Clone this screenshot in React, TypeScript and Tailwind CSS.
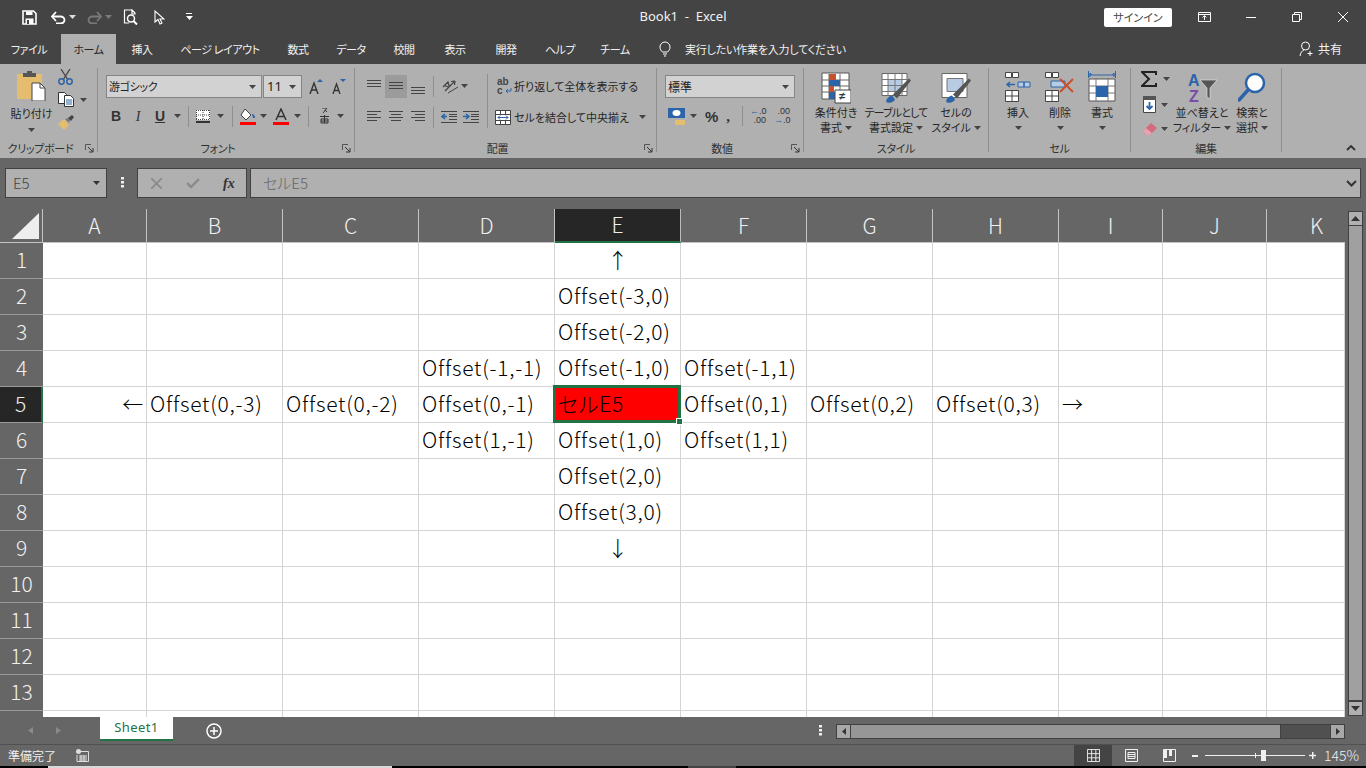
import type { ReactNode } from "react";

const colHeaders = ["A", "B", "C", "D", "E", "F", "G", "H", "I", "J", "K"];
const rowNumbers = [1, 2, 3, 4, 5, 6, 7, 8, 9, 10, 11, 12, 13, 14];

const cellText: Record<string, string> = {
  E1: "↑",
  E2: "Offset(-3,0)",
  E3: "Offset(-2,0)",
  D4: "Offset(-1,-1)",
  E4: "Offset(-1,0)",
  F4: "Offset(-1,1)",
  A5: "←",
  B5: "Offset(0,-3)",
  C5: "Offset(0,-2)",
  D5: "Offset(0,-1)",
  E5: "セルE5",
  F5: "Offset(0,1)",
  G5: "Offset(0,2)",
  H5: "Offset(0,3)",
  I5: "→",
  D6: "Offset(1,-1)",
  E6: "Offset(1,0)",
  F6: "Offset(1,1)",
  E7: "Offset(2,0)",
  E8: "Offset(3,0)",
  E9: "↓",
};

function Caret({ color = "#444" }: { color?: string }) {
  return (
    <svg width="7" height="4" viewBox="0 0 7 4" className="shrink-0">
      <path d="M0 0h7L3.5 4z" fill={color} />
    </svg>
  );
}

function Launcher() {
  return (
    <div className="w-[16px] flex justify-end pr-[3px] shrink-0">
      <svg width="9" height="9" viewBox="0 0 9 9" className="shrink-0">
        <path d="M.5 6V.5H6" stroke="#555" fill="none" />
        <path d="M3 3l5 5M8 4v4H4" stroke="#333" fill="none" />
      </svg>
    </div>
  );
}

function RibbonGroup({ label, launcher, className, children }: { label: string; launcher?: boolean; className: string; children: ReactNode }) {
  return (
    <>
      <div className={`flex flex-col h-[94px] shrink-0 ${className}`}>
        <div className="h-[75px] flex flex-col">{children}</div>
        <div className="h-[18px] flex items-center">
          <span className="flex-1 text-center text-[11px] leading-4 tracking-[-0.3px] text-[#303030] whitespace-nowrap">{label}</span>
          {launcher && <Launcher />}
        </div>
      </div>
      <div className="w-px h-[84px] mt-[4px] bg-[#8f8f8f] shrink-0" />
    </>
  );
}

function Lines({ ys, x1 = 0, x2 = 14 }: { ys: number[]; x1?: number; x2?: number }) {
  return (
    <>
      {ys.map((y) => (
        <path key={y} d={`M${x1} ${y + 0.5}H${x2}`} stroke="#444" />
      ))}
    </>
  );
}

function AlignIcon({ ys, short }: { ys: number[]; short?: "left" | "center" | "right" }) {
  return (
    <svg width="14" height="20" viewBox="0 0 14 20" className="shrink-0">
      {ys.map((y, i) => {
        const odd = i % 2 === 1 && short;
        const x1 = odd && short === "right" ? 4 : odd && short === "center" ? 2 : 0;
        const x2 = odd && short === "left" ? 10 : odd && short === "center" ? 12 : 14;
        return <path key={y} d={`M${x1} ${y + 0.5}H${x2}`} stroke="#444" />;
      })}
    </svg>
  );
}

function IndentIcon({ flip }: { flip?: boolean }) {
  return (
    <svg width="16" height="12" viewBox="0 0 16 12" className="shrink-0">
      <Lines ys={[0, 11]} x1={0} x2={16} />
      <Lines ys={[3, 5, 8]} x1={8} x2={16} />
      {flip ? (
        <path d="M0 5.5h5M3 3l3 2.5L3 8" stroke="#2a65a8" strokeWidth="1.6" fill="none" />
      ) : (
        <path d="M6 5.5H1M4 3L1 5.5 4 8" stroke="#2a65a8" strokeWidth="1.6" fill="none" />
      )}
    </svg>
  );
}

function BigButton({ lines, children, className, caretInline }: { lines: string[]; children: ReactNode; className: string; caretInline?: boolean }) {
  return (
    <div className={`flex flex-col items-center shrink-0 ${className}`}>
      <div className="h-[41px] pt-[8px] flex justify-center">{children}</div>
      {lines.map((line, i) => (
        <div
          key={line}
          className={`h-[15px] leading-[15px] text-[11px] text-[#262626] whitespace-nowrap flex items-center gap-[3px] ${line.length > 5 ? "tracking-[-0.8px]" : ""}`}
        >
          {line}
          {caretInline && i === lines.length - 1 && <Caret />}
        </div>
      ))}
      {!caretInline && (
        <div className="h-[15px] flex items-center">
          <Caret />
        </div>
      )}
    </div>
  );
}

function Tab({ className, active, children }: { className: string; active?: boolean; children: ReactNode }) {
  return (
    <div className={`h-[30px] shrink-0 flex items-center justify-center text-[11px] tracking-[-0.4px] ${active ? "bg-[#b0b0b0] text-[#262626]" : "text-[#f2f2f2]"} ${className}`}>
      {children}
    </div>
  );
}

function TitleBar() {
  return (
    <div className="h-[34px] bg-[#444444] flex items-center text-white shrink-0 [&>svg]:shrink-0 [&>div]:shrink-0">
      <svg width="15" height="15" viewBox="0 0 15 15" className="ml-[22px]">
        <path d="M1 1h10.5L14 3.5V14H1z" fill="none" stroke="#fff" strokeWidth="1.6" />
        <path d="M4 1.500h6.500V5H4zM3.500 8.500h8V14h-8z" fill="#fff" />
        <path d="M5 10v4h2v-4z" fill="#444" />
      </svg>
      <svg width="15" height="13" viewBox="0 0 15 13" className="ml-[14px]">
        <path d="M1.500 5.500h8a4 3.500 0 0 1 0 7H5" fill="none" stroke="#fff" strokeWidth="1.8" />
        <path d="M5 1L1 5.500 5 10" fill="none" stroke="#fff" strokeWidth="1.8" />
      </svg>
      <div className="ml-[3px]">
        <Caret color="#ddd" />
      </div>
      <svg width="15" height="13" viewBox="0 0 15 13" className="ml-[11px]">
        <path d="M13.500 5.500h-8a4 3.500 0 0 0 0 7H10" fill="none" stroke="#7a7a7a" strokeWidth="1.8" />
        <path d="M10 1l4 4.500L10 10" fill="none" stroke="#7a7a7a" strokeWidth="1.8" />
      </svg>
      <div className="ml-[3px]">
        <Caret color="#7a7a7a" />
      </div>
      <svg width="15" height="16" viewBox="0 0 15 16" className="ml-[11px]">
        <path d="M9 1H1.500v13H6M9 1l3 3v1H9z" fill="none" stroke="#fff" strokeWidth="1.2" />
        <circle cx="8" cy="9.500" r="3.500" fill="none" stroke="#fff" strokeWidth="1.5" />
        <path d="M10.500 12l3.500 3.500" stroke="#fff" strokeWidth="2" />
      </svg>
      <svg width="11" height="15" viewBox="0 0 11 15" className="ml-[16px]">
        <path d="M1 1v11l3-2.500 2 4.500 2-1-2-4h4z" fill="none" stroke="#fff" strokeWidth="1.1" />
      </svg>
      <svg width="7" height="8" viewBox="0 0 7 8" className="ml-[21px]">
        <path d="M0 .5h6" stroke="#fff" />
        <path d="M0 3h7L3.500 7z" fill="#fff" />
      </svg>
      <div className="ml-[445px] w-[90px] text-center text-[13px] text-[#f2f2f2] whitespace-pre font-['Noto_Sans',sans-serif]">Book1  -  Excel</div>
      <div className="ml-[376px] w-[68px] h-[19px] bg-white rounded-[2px] flex items-center justify-center text-[11px] text-[#444]">サインイン</div>
      <svg width="13" height="10" viewBox="0 0 13 10" className="ml-[26px]">
        <path d="M.5.5h12v9H.5zM.5 2.500h12M6.500 8V4M4.500 5.500l2-2 2 2" fill="none" stroke="#fff" />
      </svg>
      <svg width="10" height="1" viewBox="0 0 10 1" className="ml-[35px]">
        <path d="M0 .5h10" stroke="#fff" />
      </svg>
      <svg width="10" height="10" viewBox="0 0 10 10" className="ml-[36px]">
        <path d="M.5 2.500h7v7h-7zM2.500 2.500v-2h7v7h-2" fill="none" stroke="#fff" />
      </svg>
      <svg width="10" height="10" viewBox="0 0 10 10" className="ml-[36px]">
        <path d="M0 0l10 10M10 0L0 10" stroke="#fff" />
      </svg>
    </div>
  );
}

function TabBar() {
  return (
    <div className="h-[30px] bg-[#444444] flex items-center shrink-0">
      <Tab className="w-[58px] mr-[3px]">ファイル</Tab>
      <Tab className="w-[55px]" active>ホーム</Tab>
      <Tab className="w-[52px]">挿入</Tab>
      <Tab className="w-[104px]">ページ レイアウト</Tab>
      <Tab className="w-[52px]">数式</Tab>
      <Tab className="w-[54px]">データ</Tab>
      <Tab className="w-[52px]">校閲</Tab>
      <Tab className="w-[50px]">表示</Tab>
      <Tab className="w-[52px]">開発</Tab>
      <Tab className="w-[56px]">ヘルプ</Tab>
      <Tab className="w-[54px]">チーム</Tab>
      <svg width="12" height="16" viewBox="0 0 12 16" className="ml-[17px] shrink-0">
        <path d="M3.500 11C2 9.500 1 8.500 1 6a5 5 0 0 1 10 0c0 2.500-1 3.500-2.500 5zM4 13h4M5 15h2" fill="none" stroke="#fff" />
      </svg>
      <div className="ml-[14px] text-[11px] tracking-[-0.2px] text-[#f2f2f2] w-[160px] shrink-0 whitespace-nowrap">実行したい作業を入力してください</div>
      <svg width="15" height="16" viewBox="0 0 15 16" className="ml-[454px] shrink-0">
        <circle cx="6.500" cy="5" r="4" fill="none" stroke="#fff" />
        <path d="M1 15c.5-3.500 2-5 4-6M11 10v5M8.500 12.500h5" fill="none" stroke="#fff" />
      </svg>
      <div className="ml-[4px] text-[12px] text-[#f2f2f2]">共有</div>
    </div>
  );
}

function ClipboardGroup() {
  return (
    <RibbonGroup label="クリップボード" launcher className="w-[97px]">
      <div className="flex pl-[8px] h-full">
        <div className="w-[47px] flex flex-col items-center pt-[7px]">
          <svg width="29" height="30" viewBox="0 0 29 30" className="shrink-0">
            <path d="M0 3h25v25H0z" fill="#e4bd6f" />
            <path d="M6 2h4V0h5v2h4v4H6z" fill="#565656" />
            <path d="M15 12h8l5 5v13H15z" fill="#fff" stroke="#444" />
            <path d="M23 12v5h5" fill="none" stroke="#444" />
          </svg>
          <div className="mt-[5px] h-[15px] leading-[15px] text-[11px] text-[#262626] whitespace-nowrap">貼り付け</div>
          <div className="h-[11px] flex items-end">
            <Caret />
          </div>
        </div>
        <div className="ml-[3px] flex flex-col pt-[5px]">
          <svg width="15" height="16" viewBox="0 0 15 16" className="shrink-0">
            <path d="M3 0l7 11M12 0L5 11" stroke="#444" strokeWidth="1.3" />
            <circle cx="3.500" cy="12.500" r="2.700" fill="none" stroke="#2b64a8" strokeWidth="1.5" />
            <circle cx="11.500" cy="12.500" r="2.700" fill="none" stroke="#2b64a8" strokeWidth="1.5" />
          </svg>
          <div className="flex items-center mt-[7px]">
            <svg width="16" height="15" viewBox="0 0 16 15" className="shrink-0">
              <path d="M.5.500h6l2 2v9H.5z" fill="#fff" stroke="#333" />
              <path d="M6.500 3.500h6l3 3v8h-9z" fill="#fff" stroke="#333" />
              <path d="M8 8h6M8 10h6M8 12h6" stroke="#2b64a8" />
            </svg>
            <div className="ml-[6px]">
              <Caret />
            </div>
          </div>
          <svg width="16" height="15" viewBox="0 0 16 15" className="mt-[8px] shrink-0">
            <path d="M0 9l6-5 5 6-5 5z" fill="#e4bd6f" />
            <path d="M7 4l3-1 2 2-1 3z" fill="#777" />
            <path d="M10 3l4-3 2 2-3 4z" fill="#444" />
          </svg>
        </div>
      </div>
    </RibbonGroup>
  );
}

function FontGroup() {
  return (
    <RibbonGroup label="フォント" launcher className="w-[256px]">
      <div className="flex pl-[8px] pt-[11px] items-start">
        <div className="w-[156px] h-[23px] bg-[#d2d2d2] border border-[#858585] flex items-center justify-between pl-[2px] pr-[5px] text-[11px] tracking-[-0.3px] text-[#222]">
          游ゴシック
          <Caret />
        </div>
        <div className="ml-px w-[39px] h-[23px] bg-[#d2d2d2] border border-[#858585] flex items-center justify-between pl-[3px] pr-[5px] text-[13px] text-[#222] font-['Noto_Sans',sans-serif]">
          11
          <Caret />
        </div>
        <svg width="14" height="15" viewBox="0 0 14 15" className="ml-[7px] mt-[4px] shrink-0">
          <path d="M1 15L5 4l4 11M2.500 11h5" fill="none" stroke="#333" strokeWidth="1.4" />
          <path d="M8 3l3-3 3 3z" fill="#2b64a8" />
        </svg>
        <svg width="14" height="15" viewBox="0 0 14 15" className="ml-[9px] mt-[4px] shrink-0">
          <path d="M1 15L4.500 5 8 15M2.300 11.500h4.500" fill="none" stroke="#333" strokeWidth="1.3" />
          <path d="M8 0h6l-3 3z" fill="#2b64a8" />
        </svg>
      </div>
      <div className="flex items-center pl-[7px] mt-[7px] h-[22px]">
        <span className="w-[22px] text-center text-[14px] font-bold text-[#333] font-['Liberation_Sans',sans-serif]">B</span>
        <span className="w-[22px] text-center text-[14px] italic text-[#333] font-['Liberation_Serif',serif]">I</span>
        <span className="w-[22px] text-center text-[14px] font-bold underline text-[#333] font-['Liberation_Sans',sans-serif]">U</span>
        <div className="w-[12px] flex justify-center">
          <Caret />
        </div>
        <div className="ml-[5px] w-px h-[21px] bg-[#8f8f8f]" />
        <div className="w-[28px] flex justify-center">
          <svg width="14" height="13" viewBox="0 0 14 13" className="shrink-0">
            <path d="M0 0h14v10H0z" fill="#fff" />
            <path d="M.5 0v10M7 0v10M13.500 0v10M0 .5h14M0 5h14M0 9.500h14" stroke="#444" strokeDasharray="1 1" />
            <path d="M0 12h14" stroke="#333" strokeWidth="2" />
          </svg>
        </div>
        <Caret />
        <div className="ml-[8px] w-px h-[21px] bg-[#8f8f8f]" />
        <div className="w-[27px] pl-[7px] shrink-0">
          <svg width="16" height="17" viewBox="0 0 16 17">
            <path d="M5 1l6 6-5 5-5-5z" fill="#fff" stroke="#444" />
            <path d="M12 6c2 0 3 2 3 4h-2z" fill="#2b64a8" />
            <path d="M0 15.500h16" stroke="#ff0000" strokeWidth="3" />
          </svg>
        </div>
        <Caret />
        <div className="ml-[6px] w-[16px] shrink-0">
          <svg width="16" height="17" viewBox="0 0 16 17">
            <path d="M3 12L8 1l5 11M4.500 8.500h7" fill="none" stroke="#333" strokeWidth="1.5" />
            <path d="M0 15.500h16" stroke="#ff0000" strokeWidth="3" />
          </svg>
        </div>
        <div className="ml-[5px]">
          <Caret />
        </div>
        <div className="ml-[7px] w-px h-[21px] bg-[#8f8f8f]" />
        <div className="ml-[11px] w-[9px] shrink-0">
          <svg width="9" height="16" viewBox="0 0 9 16">
            <path d="M2 0h5L3 5M5 2l2 2" fill="none" stroke="#333" />
            <path d="M0 8.500h9M1 11h7v4H1zM4.500 7v8M1 13h7" fill="none" stroke="#333" />
          </svg>
        </div>
        <div className="ml-[8px]">
          <Caret />
        </div>
      </div>
    </RibbonGroup>
  );
}

function AlignGroup() {
  return (
    <RibbonGroup label="配置" launcher className="w-[301px]">
      <div className="flex pt-[10px]">
        <div className="w-[132px] pl-[8px] flex flex-col shrink-0">
          <div className="flex items-center h-[24px]">
            <div className="w-[22px] h-[23px] flex justify-center pt-[5px]">
              <svg width="14" height="8" viewBox="0 0 14 8" className="shrink-0">
                <Lines ys={[0, 3, 6]} />
              </svg>
            </div>
            <div className="w-[22px] h-[23px] bg-[#9b9b9b] flex justify-center items-center">
              <svg width="14" height="8" viewBox="0 0 14 8" className="shrink-0">
                <Lines ys={[0, 3, 6]} />
              </svg>
            </div>
            <div className="w-[22px] h-[23px] flex justify-center pt-[12px]">
              <svg width="14" height="8" viewBox="0 0 14 8" className="shrink-0">
                <Lines ys={[0, 3, 6]} />
              </svg>
            </div>
            <div className="ml-[4px] w-px h-[21px] bg-[#8f8f8f]" />
            <svg width="17" height="17" viewBox="0 0 17 17" className="ml-[8px] shrink-0">
              <path d="M1 9l5-5 1.500 5M2.500 7.500l4 1.500M3 13l10-10M13 3l-4 .5M13 3l-.5 4" fill="none" stroke="#444" strokeWidth="1.2" />
              <path d="M6 15L16 9" stroke="#444" />
            </svg>
            <div className="ml-[2px]">
              <Caret />
            </div>
          </div>
          <div className="flex items-center h-[24px] mt-[7px]">
            <div className="w-[22px] flex justify-center">
              <AlignIcon ys={[4, 7, 10, 13]} short="left" />
            </div>
            <div className="w-[22px] flex justify-center">
              <AlignIcon ys={[4, 7, 10, 13]} short="center" />
            </div>
            <div className="w-[22px] flex justify-center">
              <AlignIcon ys={[4, 7, 10, 13]} short="right" />
            </div>
            <div className="ml-[4px] w-px h-[21px] bg-[#8f8f8f]" />
            <div className="ml-[7px]">
              <IndentIcon />
            </div>
            <div className="ml-[6px]">
              <IndentIcon flip />
            </div>
          </div>
        </div>
        <div className="w-px h-[54px] bg-[#8f8f8f] shrink-0" />
        <div className="flex flex-col pl-[7px] text-[11px] text-[#262626] whitespace-nowrap">
          <div className="flex items-center h-[24px]">
            <svg width="16" height="18" viewBox="0 0 16 18" className="ml-[2px] shrink-0">
              <text x="0" y="8" fontSize="10" fontWeight="700" fill="#444" fontFamily="Liberation Sans">ab</text>
              <text x="0" y="17" fontSize="10" fontWeight="700" fill="#444" fontFamily="Liberation Sans">c</text>
              <path d="M14 11v3H9M11 12l-2 2 2 2" fill="none" stroke="#2b64a8" />
            </svg>
            <span className="ml-[1px] w-[128px]">折り返して全体を表示する</span>
          </div>
          <div className="flex items-center h-[24px] mt-[7px]">
            <svg width="16" height="15" viewBox="0 0 16 15" className="shrink-0">
              <path d="M.5.500h15v14H.5z" fill="#fff" stroke="#444" />
              <path d="M1 4.500h14M1 10.500h14M5.500 1v3M10.500 1v3M5.500 11v3M10.500 11v3" stroke="#444" />
              <path d="M3 7.500h10M5 5.500l-2 2 2 2M11 5.500l2 2-2 2" fill="none" stroke="#2b64a8" />
            </svg>
            <span className="ml-[3px] w-[125px]">セルを結合して中央揃え</span>
            <Caret />
          </div>
        </div>
      </div>
    </RibbonGroup>
  );
}

function NumberGroup() {
  return (
    <RibbonGroup label="数値" launcher className="w-[146px]">
      <div className="pl-[8px] pt-[11px]">
        <div className="w-[130px] h-[23px] bg-[#d2d2d2] border border-[#858585] flex items-center justify-between pl-[2px] pr-[5px] text-[12px] text-[#222]">
          標準
          <Caret />
        </div>
      </div>
      <div className="flex items-center pl-[11px] mt-[7px] h-[22px]">
        <svg width="18" height="19" viewBox="0 0 18 19" className="shrink-0">
          <path d="M0 1h17v10H0z" fill="#2b64a8" />
          <ellipse cx="8.500" cy="6" rx="4" ry="3" fill="#fff" />
          <path d="M7 13h10v5H7z" fill="#e4bd6f" />
        </svg>
        <div className="ml-[4px]">
          <Caret />
        </div>
        <span className="ml-[8px] text-[15px] leading-none text-[#333] font-['Liberation_Sans',sans-serif] font-bold">%</span>
        <span className="ml-[8px] text-[15px] leading-none text-[#333] font-['Liberation_Serif',serif] font-bold">,</span>
        <div className="ml-[12px] w-px h-[20px] bg-[#8f8f8f]" />
        <div className="ml-[7px] w-[16px] text-[9px] leading-[9px] text-[#333] font-['Liberation_Sans',sans-serif] whitespace-nowrap">
          <div><span className="text-[#2b64a8]">←</span>.0</div>
          <div className="text-right">.00</div>
        </div>
        <div className="ml-[8px] w-[16px] text-[9px] leading-[9px] text-[#333] font-['Liberation_Sans',sans-serif] whitespace-nowrap">
          <div className="text-right">.00</div>
          <div><span className="text-[#2b64a8]">→</span>.0</div>
        </div>
      </div>
    </RibbonGroup>
  );
}

function StyleGroup() {
  return (
    <RibbonGroup label="スタイル" className="w-[184px]">
      <div className="flex">
        <BigButton lines={["条件付き", "書式"]} className="w-[64px]" caretInline>
          <svg width="30" height="32" viewBox="0 0 30 30" className="shrink-0">
            <path d="M1 0h27v26H1z" fill="#fff" stroke="#555" />
            <path d="M8 1v25M19 1v25M1 7h27M1 13h27M1 19h27" stroke="#666" />
            <path d="M8 1h7v6H8z" fill="#c8502a" />
            <path d="M8 7h11v6H8z" fill="#2b64a8" />
            <path d="M8 13h5v6H8z" fill="#c8502a" />
            <path d="M8 19h6v7H8z" fill="#2b64a8" />
            <path d="M14 17h16v13H14z" fill="#fff" stroke="#444" />
            <text x="18" y="27" fontSize="11" fontWeight="700" fill="#333" fontFamily="Liberation Sans">≠</text>
          </svg>
        </BigButton>
        <BigButton lines={["テーブルとして", "書式設定"]} className="w-[56px]" caretInline>
          <svg width="30" height="32" viewBox="0 0 30 31" className="shrink-0">
            <path d="M1 1h25v22H1z" fill="#fff" stroke="#666" />
            <path d="M7 7h14v12H7z" fill="#b7cbe3" />
            <path d="M7 1v22M14 1v22M21 1v22M1 7h25M1 13h25M1 19h25" stroke="#777" />
            <path d="M6 30c-2-1 0-6 5-7l3 4c-1 2-4 4-8 3z" fill="#2b64a8" />
            <path d="M12 22L28 6l2 2-14 18z" fill="#555" />
          </svg>
        </BigButton>
        <BigButton lines={["セルの", "スタイル"]} className="w-[64px]" caretInline>
          <svg width="30" height="32" viewBox="0 0 30 31" className="shrink-0">
            <path d="M1 1h25v24H1z" fill="#fff" stroke="#666" />
            <path d="M6 6h16v13H6z" fill="#b7cbe3" stroke="#777" />
            <path d="M6 30c-2-1 0-6 5-7l3 4c-1 2-4 4-8 3z" fill="#2b64a8" />
            <path d="M12 22L28 6l2 2-14 18z" fill="#555" />
          </svg>
        </BigButton>
      </div>
    </RibbonGroup>
  );
}

function CellGroup() {
  return (
    <RibbonGroup label="セル" className="w-[141px]">
      <div className="flex pl-[8px]">
        <BigButton lines={["挿入"]} className="w-[42px]">
          <svg width="26" height="30" viewBox="0 0 26 30" className="shrink-0">
            <path d="M.5.500h6v5h-6zM7.500.500h6v5h-6zM.5 18.500h13v11H.5zM7 18.500v11M.5 24h13" fill="#fff" stroke="#444" />
            <path d="M13 10h6v5h-6zM19 10h6v5h-6z" fill="#b7cbe3" stroke="#2b64a8" />
            <path d="M10 12.500H2M5 10l-3 2.500L5 15" fill="none" stroke="#2b64a8" strokeWidth="1.5" />
          </svg>
        </BigButton>
        <BigButton lines={["削除"]} className="w-[42px]">
          <svg width="30" height="30" viewBox="0 0 30 30" className="shrink-0">
            <path d="M.5.500h6v5h-6zM7.500.500h6v5h-6zM.5 18.500h13v11H.5zM7 18.500v11M.5 24h13" fill="#fff" stroke="#444" />
            <path d="M6 9h14v6H6z" fill="#b7cbe3" stroke="#2b64a8" />
            <path d="M15 7l13 13M28 7L15 20" stroke="#c8502a" strokeWidth="2" />
          </svg>
        </BigButton>
        <BigButton lines={["書式"]} className="w-[42px]">
          <svg width="28" height="33" viewBox="0 0 28 33" className="-mt-[1px] shrink-0">
            <path d="M1 4h26M4 4l-2-2v4M24 4l2-2v4M.5 0v7M27.500 0v7" stroke="#2b64a8" fill="none" />
            <path d="M1 8h26v22H1z" fill="#fff" stroke="#555" />
            <path d="M8 8v22M20 8v22M1 15h26M1 22h26" stroke="#777" />
            <path d="M8 15h12v11H8z" fill="#2b64a8" />
          </svg>
        </BigButton>
      </div>
    </RibbonGroup>
  );
}

function EditGroup() {
  return (
    <RibbonGroup label="編集" className="w-[150px]">
      <div className="flex">
        <div className="w-[38px] pl-[10px] pt-[7px] flex flex-col shrink-0">
          <div className="flex items-center h-[16px]">
            <svg width="16" height="16" viewBox="0 0 16 16" className="shrink-0">
              <path d="M15 4V1H1l7 7-7 7h14v-3" fill="none" stroke="#222" strokeWidth="2" />
            </svg>
            <div className="ml-[6px]">
              <Caret />
            </div>
          </div>
          <div className="flex items-center h-[17px] mt-[9px] pl-[2px]">
            <svg width="13" height="17" viewBox="0 0 13 17" className="shrink-0">
              <path d="M.5.500h12v16H.5z" fill="#fff" stroke="#444" />
              <path d="M0 0h13v4H0z" fill="#555" />
              <path d="M6.500 6v7M3.500 10l3 3 3-3" fill="none" stroke="#2b64a8" strokeWidth="1.8" />
            </svg>
            <div className="ml-[5px]">
              <Caret />
            </div>
          </div>
          <div className="flex items-center h-[15px] mt-[8px] pl-[2px]">
            <svg width="14" height="14" viewBox="0 0 14 14" className="shrink-0">
              <path d="M0 9l8-8 6 5-7 7H3z" fill="#d4697f" />
              <path d="M0 9l3-3 6 5-2 2H3z" fill="#e6a3ad" />
            </svg>
            <div className="ml-[4px]">
              <Caret />
            </div>
          </div>
        </div>
        <BigButton lines={["並べ替えと", "フィルター"]} className="w-[66px]" caretInline>
          <svg width="30" height="32" viewBox="0 0 30 32" className="shrink-0">
            <text x="1" y="14" fontSize="16" fontWeight="700" fill="#2b64a8" fontFamily="Liberation Sans">A</text>
            <text x="2" y="30" fontSize="16" fontWeight="700" fill="#7a4ba8" fontFamily="Liberation Sans">Z</text>
            <path d="M13 8h17l-7 8v11l-3-2v-9z" fill="#555" stroke="#eee" strokeWidth=".6" />
          </svg>
        </BigButton>
        <BigButton lines={["検索と", "選択"]} className="w-[34px]" caretInline>
          <svg width="28" height="30" viewBox="0 0 28 30" className="shrink-0">
            <circle cx="17" cy="11" r="9" fill="#fff" stroke="#2b64a8" strokeWidth="2.5" />
            <path d="M10 18L1 28" stroke="#2b64a8" strokeWidth="3.5" strokeLinecap="round" />
          </svg>
        </BigButton>
      </div>
    </RibbonGroup>
  );
}

function Ribbon() {
  return (
    <div className="h-[94px] bg-[#b0b0b0] flex shrink-0">
      <ClipboardGroup />
      <FontGroup />
      <AlignGroup />
      <NumberGroup />
      <StyleGroup />
      <CellGroup />
      <EditGroup />
      <div className="flex-1 flex items-end justify-end pr-[10px] pb-[7px]">
        <svg width="10" height="6" viewBox="0 0 10 6" className="shrink-0">
          <path d="M1 5l4-4 4 4" fill="none" stroke="#333" strokeWidth="1.8" />
        </svg>
      </div>
    </div>
  );
}

function FormulaBar() {
  return (
    <div className="h-[51px] bg-[#666666] flex items-start pt-[10px] shrink-0">
      <div className="ml-[5px] w-[102px] h-[30px] bg-[#b0b0b0] border border-[#404040] flex items-center justify-between pl-[7px] pr-[6px]">
        <span className="text-[15px] text-[#444] font-light">E5</span>
        <Caret color="#333" />
      </div>
      <svg width="3" height="11" viewBox="0 0 3 11" className="ml-[14px] mt-[9px] shrink-0">
        <path d="M0 0h3v2.500H0zM0 4h3v2.500H0zM0 8h3v2.500H0z" fill="#f0f0f0" />
      </svg>
      <div className="ml-[13px] w-[110px] h-[30px] bg-[#b0b0b0] border border-[#404040] flex items-center">
        <svg width="11" height="11" viewBox="0 0 11 11" className="ml-[13px] shrink-0">
          <path d="M0 0l11 11M11 0L0 11" stroke="#8a8a8a" strokeWidth="1.8" />
        </svg>
        <svg width="14" height="11" viewBox="0 0 14 11" className="ml-[24px] shrink-0">
          <path d="M1 5l4 4 8-8" fill="none" stroke="#8a8a8a" strokeWidth="2.4" />
        </svg>
        <span className="ml-[23px] text-[14px] font-bold italic text-[#333] font-['Liberation_Serif',serif]">fx</span>
      </div>
      <div className="ml-[3px] w-[1111px] h-[30px] bg-[#b0b0b0] border border-[#404040] flex items-center justify-between pl-[12px] pr-[3px]">
        <span className="text-[15px] text-[#666] font-light">セルE5</span>
        <svg width="11" height="7" viewBox="0 0 11 7" className="shrink-0">
          <path d="M1 1l4.500 4.500L10 1" fill="none" stroke="#333" strokeWidth="2" />
        </svg>
      </div>
    </div>
  );
}

function GridCell({ col, row }: { col: string; row: number }) {
  const id = `${col}${row}`;
  const text = cellText[id];
  const isSelected = id === "E5";
  const isArrowV = text === "↑" || text === "↓";
  const isLeftArrow = text === "←";
  return (
    <div
      className={`border-r border-b border-[#d4d4d4] flex items-center pl-[3px] pr-[2px] pb-[2px] text-[21px] font-light whitespace-nowrap tracking-[0.75px] text-black ${
        isSelected ? "relative z-10 bg-[#ff0000]" : "bg-white"
      } ${isArrowV ? "justify-center" : ""} ${isLeftArrow ? "justify-end" : ""}`}
    >
      {text}
      {isSelected && (
        <div className="absolute left-[-2px] top-[-2px] w-[128px] h-[38px] border-[3px] border-[#217346]">
          <div className="absolute right-[-5px] bottom-[-5px] w-[7px] h-[7px] bg-[#217346] border border-white" />
        </div>
      )}
    </div>
  );
}

function Sheet() {
  return (
    <div className="flex h-[508px] shrink-0 bg-[#666666]">
      <div className="w-[1345px] h-[508px] overflow-hidden">
        <div className="grid grid-cols-[43px_104px_136px_136px_136px_126px_126px_126px_126px_104px_104px_78px] grid-rows-[34px_repeat(14,36px)]">
          <div className="bg-[#666666] border-r border-b border-[#c4c4c4] flex items-end justify-end pr-[3px] pb-[3px]">
            <svg width="27" height="26" viewBox="0 0 27 26" className="shrink-0">
              <path d="M27 0v26H0z" fill="#eeeeee" />
            </svg>
          </div>
          {colHeaders.map((c) => (
            <div
              key={c}
              className={`flex items-center text-[21px] font-light text-[#f0f0f0] border-r ${c === "K" ? "justify-start pl-[43px] border-r-0" : "justify-center"} ${
                c === "E" ? "bg-[#262626] border-b-2 border-b-[#217346] border-r-[#bbbbbb]" : "bg-[#666666] border-b border-[#c4c4c4]"
              }`}
            >
              {c}
            </div>
          ))}
          {rowNumbers.map((n) => (
            <div key={n} className="contents">
              <div
                className={`flex items-center justify-center pb-[2px] text-[21px] font-light text-[#f0f0f0] border-b border-[#9a9a9a] ${
                  n === 5 ? "bg-[#262626] border-r-2 border-r-[#217346]" : "bg-[#666666]"
                }`}
              >
                {n}
              </div>
              {colHeaders.map((c) => (
                <GridCell key={c} col={c} row={n} />
              ))}
            </div>
          ))}
        </div>
      </div>
      <div className="w-[21px] flex flex-col pl-[3px] pt-[2px]">
        <div className="w-[15px] h-[15px] bg-[#b0b0b0] border border-[#404040] flex items-center justify-center">
          <svg width="9" height="5" viewBox="0 0 9 5" className="shrink-0">
            <path d="M4.500 0L9 5H0z" fill="#333" />
          </svg>
        </div>
        <div className="w-[15px] h-[475px] bg-[#a0a0a0] border-x border-b border-[#404040]" />
        <div className="w-[15px] h-[15px] bg-[#b0b0b0] border border-[#404040] flex items-center justify-center">
          <svg width="9" height="5" viewBox="0 0 9 5" className="shrink-0">
            <path d="M0 0h9L4.500 5z" fill="#333" />
          </svg>
        </div>
      </div>
    </div>
  );
}

function SheetTabs() {
  return (
    <div className="h-[28px] bg-[#666666] border-b border-[#505050] flex items-start shrink-0 [&>svg]:shrink-0">
      <svg width="5" height="7" viewBox="0 0 5 7" className="ml-[28px] mt-[10px]">
        <path d="M5 0v7L0 3.500z" fill="#8a8a8a" />
      </svg>
      <svg width="5" height="7" viewBox="0 0 5 7" className="ml-[23px] mt-[10px]">
        <path d="M0 0v7l5-3.500z" fill="#8a8a8a" />
      </svg>
      <div className="ml-[39px] w-[73px] h-[24px] shrink-0 bg-white border-b-2 border-[#217346] flex items-center justify-center text-[13px] tracking-[0.4px] text-[#217346] font-['Noto_Sans',sans-serif]">
        Sheet1
      </div>
      <svg width="16" height="16" viewBox="0 0 16 16" className="ml-[33px] mt-[6px]">
        <circle cx="8" cy="8" r="7" fill="none" stroke="#fff" strokeWidth="1.5" />
        <path d="M8 4v8M4 8h8" stroke="#fff" strokeWidth="1.5" />
      </svg>
      <svg width="3" height="11" viewBox="0 0 3 11" className="ml-[597px] mt-[8px]">
        <path d="M0 0h3v2.500H0zM0 4h3v2.500H0zM0 8h3v2.500H0z" fill="#f0f0f0" />
      </svg>
      <div className="ml-[14px] mt-[7px] w-[509px] h-[15px] shrink-0 bg-[#505050] border border-[#404040] flex">
        <div className="w-[14px] bg-[#a8a8a8] border-r border-[#404040] flex items-center justify-center">
          <svg width="4" height="7" viewBox="0 0 4 7" className="shrink-0">
            <path d="M4 0v7L0 3.500z" fill="#333" />
          </svg>
        </div>
        <div className="w-[430px] bg-[#969696] border-r border-[#404040]" />
        <div className="ml-auto w-[14px] bg-[#a8a8a8] border-l border-[#404040] flex items-center justify-center">
          <svg width="4" height="7" viewBox="0 0 4 7" className="shrink-0">
            <path d="M0 0v7l4-3.500z" fill="#333" />
          </svg>
        </div>
      </div>
    </div>
  );
}

function StatusBar() {
  return (
    <div className="h-[21px] bg-[#666666] flex items-center shrink-0 text-[#f0f0f0] [&>svg]:shrink-0">
      <span className="ml-[8px] w-[48px] text-[12px] whitespace-nowrap">準備完了</span>
      <svg width="13" height="13" viewBox="0 0 13 13" className="ml-[20px]">
        <circle cx="2.500" cy="2.500" r="2.500" fill="#ddd" />
        <path d="M4 2.500h8.500v10H1V6M3 7h8M3 9h8M3 11h8M5 6v6M8 6v6" fill="none" stroke="#ddd" />
      </svg>
      <div className="ml-[985px] w-[38px] h-[21px] shrink-0 bg-[#444444] flex items-center justify-center">
        <svg width="13" height="13" viewBox="0 0 14 14" className="shrink-0">
          <path d="M.5.5h13v13H.5zM5 .5v13M9.500.5v13M.5 5h13M.5 9.500h13" stroke="#f0f0f0" fill="none" />
        </svg>
      </div>
      <svg width="13" height="13" viewBox="0 0 13 13" className="ml-[13px]">
        <path d="M.5.500h12v12H.5zM3 3.500h7v6H3zM3 5.500h7M3 7.500h7" fill="none" stroke="#f0f0f0" />
      </svg>
      <svg width="13" height="13" viewBox="0 0 13 13" className="ml-[25px]">
        <path d="M.5.500h12v12H.5z" fill="none" stroke="#f0f0f0" />
        <path d="M1 1h3v8H1zM6 1h3v6H6z" fill="#f0f0f0" />
      </svg>
      <svg width="6" height="2" viewBox="0 0 6 2" className="ml-[16px]">
        <path d="M0 0h6v2H0z" fill="#f0f0f0" />
      </svg>
      <div className="ml-[7px] w-[100px] h-[1px] shrink-0 bg-[#f0f0f0] flex items-center pl-[50px]">
        <div className="w-px h-[5px] bg-[#f0f0f0]" />
        <div className="ml-[5px] w-[5px] h-[11px] bg-[#f0f0f0]" />
      </div>
      <svg width="7" height="7" viewBox="0 0 7 7" className="ml-[4px]">
        <path d="M3 0h1.500v7H3zM0 2.800h7v1.500H0z" fill="#f0f0f0" />
      </svg>
      <span className="ml-[8px] text-[14px] font-light whitespace-nowrap">145%</span>
    </div>
  );
}

export default function App() {
  return (
    <div className="w-[1366px] h-[768px] overflow-hidden flex flex-col bg-black font-['Noto_Sans_CJK_JP',sans-serif] [font-feature-settings:'palt']">
      <TitleBar />
      <TabBar />
      <Ribbon />
      <FormulaBar />
      <Sheet />
      <SheetTabs />
      <StatusBar />
      <div className="h-[2px] flex shrink-0">
        <div className="w-[48px]" />
        <div className="w-[344px] bg-[#d8d8d8]" />
        <div className="w-[296px]" />
        <div className="w-[48px] bg-[#444444]" />
      </div>
    </div>
  );
}
